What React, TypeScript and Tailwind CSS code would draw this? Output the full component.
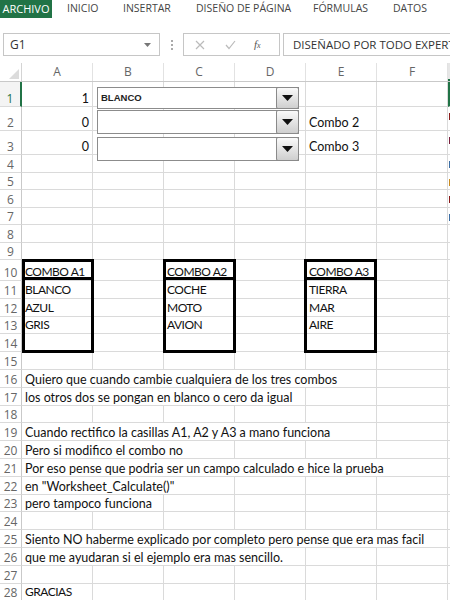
import React from "react";

const COLS = ["A", "B", "C", "D", "E", "F"];

type Row = {
  n: number;
  h: string;
  cells?: { col: number; text: string; span?: number; right?: boolean }[];
};

const rows: Row[] = [
  { n: 1, h: "h-[25px]", cells: [{ col: 0, text: "1", right: true }] },
  { n: 2, h: "h-[24px]", cells: [{ col: 0, text: "0", right: true }, { col: 4, text: "Combo 2" }] },
  { n: 3, h: "h-[24px]", cells: [{ col: 0, text: "0", right: true }, { col: 4, text: "Combo 3" }] },
  { n: 4, h: "h-[17.5px]" },
  { n: 5, h: "h-[17.5px]" },
  { n: 6, h: "h-[17.5px]" },
  { n: 7, h: "h-[17.5px]" },
  { n: 8, h: "h-[17.5px]" },
  { n: 9, h: "h-[17.5px]" },
  { n: 10, h: "h-[21px]", cells: [{ col: 0, text: "COMBO A1" }, { col: 2, text: "COMBO A2" }, { col: 4, text: "COMBO A3" }] },
  { n: 11, h: "h-[17.8px]", cells: [{ col: 0, text: "BLANCO" }, { col: 2, text: "COCHE" }, { col: 4, text: "TIERRA" }] },
  { n: 12, h: "h-[17.8px]", cells: [{ col: 0, text: "AZUL" }, { col: 2, text: "MOTO" }, { col: 4, text: "MAR" }] },
  { n: 13, h: "h-[17.8px]", cells: [{ col: 0, text: "GRIS" }, { col: 2, text: "AVION" }, { col: 4, text: "AIRE" }] },
  { n: 14, h: "h-[17.8px]" },
  { n: 15, h: "h-[17.8px]" },
  { n: 16, h: "h-[17.8px]", cells: [{ col: 0, span: 5, text: "Quiero que cuando cambie cualquiera de los tres combos" }] },
  { n: 17, h: "h-[17.8px]", cells: [{ col: 0, span: 4, text: "los otros dos se pongan en blanco o cero da igual" }] },
  { n: 18, h: "h-[17.8px]" },
  { n: 19, h: "h-[17.8px]", cells: [{ col: 0, span: 5, text: "Cuando rectifico la casillas A1, A2 y A3 a mano funciona" }] },
  { n: 20, h: "h-[17.8px]", cells: [{ col: 0, span: 3, text: "Pero si modifico el combo no" }] },
  { n: 21, h: "h-[17.8px]", cells: [{ col: 0, span: 6, text: "Por eso pense que podria ser un campo calculado e hice la prueba" }] },
  { n: 22, h: "h-[17.8px]", cells: [{ col: 0, span: 3, text: 'en "Worksheet_Calculate()"' }] },
  { n: 23, h: "h-[17.8px]", cells: [{ col: 0, span: 2, text: "pero tampoco funciona" }] },
  { n: 24, h: "h-[17.8px]" },
  { n: 25, h: "h-[17.8px]", cells: [{ col: 0, span: 6, text: "Siento NO haberme explicado por completo pero pense que era mas facil" }] },
  { n: 26, h: "h-[17.8px]", cells: [{ col: 0, span: 4, text: "que me ayudaran si el ejemplo era mas sencillo." }] },
  { n: 27, h: "h-[17.8px]" },
  { n: 28, h: "h-[17.8px]", cells: [{ col: 0, span: 1, text: "GRACIAS" }] },
];

// little bits of text spilling in from column G
const gBits: Record<number, string> = {
  1: "bg-[#b5651d]",
  2: "bg-[#8b1a1a]",
  3: "bg-[#7a1f3d]",
  4: "bg-[#3b6ea5]",
  5: "bg-[#c98a1e]",
  6: "bg-[#8b1a1a]",
  7: "bg-[#3b6ea5]",
};

const spanClass: Record<number, string> = {
  1: "col-span-1",
  2: "col-span-2",
  3: "col-span-3",
  4: "col-span-4",
  5: "col-span-5",
  6: "col-span-6",
};

const Combo = ({ top, h, text }: { top: string; h: string; text?: string }) => (
  <div className={`absolute left-[97px] w-[202px] ${top} ${h} flex border border-[#8c8c8c] bg-white`}>
    <div className="flex-1 flex items-center pl-[3px] text-[9.5px] font-bold text-[#222] [font-family:'Liberation_Sans',sans-serif]">
      {text}
    </div>
    <div className="w-[23px] -my-px -mr-px flex items-center justify-center rounded-[2px] border border-[#8a8a8a] bg-gradient-to-b from-[#fafafa] to-[#cfcfcf]">
      <svg width="11" height="6" viewBox="0 0 11 6">
        <path d="M0 0h11L5.5 6z" fill="#111" />
      </svg>
    </div>
  </div>
);

export default function App() {
  return (
    <div className="w-[450px] h-[600px] overflow-hidden bg-white [font-family:Lato,'Liberation_Sans',sans-serif]">
      {/* ribbon tabs */}
      <div className="flex h-[18px] items-center text-[10.5px] text-[#444] [font-family:'Open_Sans',sans-serif] whitespace-nowrap">
        <div className="w-[52px] h-full flex items-center justify-center bg-[#217346] text-white text-[11px]">ARCHIVO</div>
        <div className="ml-[15px] w-[56px]">INICIO</div>
        <div className="w-[73px]">INSERTAR</div>
        <div className="w-[117px]">DISEÑO DE PÁGINA</div>
        <div className="w-[80px]">FÓRMULAS</div>
        <div>DATOS</div>
      </div>

      {/* formula bar */}
      <div className="mt-[15px] flex h-[23px] items-stretch [font-family:'Open_Sans',sans-serif]">
        <div className="ml-[3px] w-[157px] flex items-center justify-between border border-[#c6c6c6] pl-[6px] pr-[8px] text-[12px] text-[#333]">
          <span>G1</span>
          <svg width="7" height="4" viewBox="0 0 7 4">
            <path d="M0 0h7L3.5 4z" fill="#777" />
          </svg>
        </div>
        <div className="w-[23px] flex flex-col items-center justify-center gap-[2px]">
          <span className="w-[2px] h-[2px] bg-[#aaa]" />
          <span className="w-[2px] h-[2px] bg-[#aaa]" />
          <span className="w-[2px] h-[2px] bg-[#aaa]" />
        </div>
        <div className="w-[97px] flex items-center border border-[#c6c6c6] px-[11px] text-[#bbb]">
          <svg width="10" height="10" viewBox="0 0 10 10" className="mr-[20px]">
            <path d="M1 1l8 8M9 1L1 9" stroke="#bbb" strokeWidth="1.2" />
          </svg>
          <svg width="11" height="10" viewBox="0 0 11 10" className="mr-[18px]">
            <path d="M1 5l3 3.5L10 1" stroke="#bbb" strokeWidth="1.2" fill="none" />
          </svg>
          <span className="text-[11px] italic text-[#555] [font-family:'Liberation_Serif',serif]">
            f<span className="text-[8px]">x</span>
          </span>
        </div>
        <div className="ml-[3px] flex-1 flex items-center border border-[#c6c6c6] border-r-0 pl-[9px] text-[11.5px] text-[#333] whitespace-nowrap overflow-hidden">
          DISEÑADO POR TODO EXPERTOS
        </div>
      </div>

      {/* sheet */}
      <div className="mt-[7px] relative">
        {/* column headers */}
        <div className="grid grid-cols-[22px_repeat(6,71px)_1fr] h-[19px] border-b border-[#c9c9c9] text-[12px] text-[#666] [font-family:'Open_Sans',sans-serif]">
          <div className="relative border-r border-[#d4d4d4]">
            <svg width="10" height="10" viewBox="0 0 10 10" className="absolute right-[2px] bottom-[2px]">
              <path d="M10 0v10H0z" fill="#dcdcdc" />
            </svg>
          </div>
          {COLS.map((c) => (
            <div key={c} className="flex items-center justify-center border-r border-[#e2e2e2]">
              {c}
            </div>
          ))}
          <div className="bg-[#e6e6e6] border-b-2 border-[#217346]" />
        </div>

        {/* rows */}
        {rows.map((r) => {
          const filled = new Map<number, { text: string; span?: number; right?: boolean }>();
          r.cells?.forEach((c) => filled.set(c.col, c));
          const out: React.ReactNode[] = [];
          let i = 0;
          while (i < 6) {
            const c = filled.get(i);
            if (c) {
              const span = c.span ?? 1;
              const caps = /^[A-Z0-9 ]+$/.test(c.text) && /[A-Z]/.test(c.text);
              out.push(
                <div
                  key={i}
                  className={`${spanClass[span]} flex items-end leading-[15px] border-r border-b border-[#dadada] text-[#111] whitespace-nowrap overflow-hidden ${
                    caps ? "text-[12px] tracking-[-0.5px] pb-[1px]" : "text-[12.5px]"
                  } ${c.right ? "justify-end pr-[3px]" : "pl-[3px]"}`}
                >
                  {c.text}
                </div>
              );
              i += span;
            } else {
              out.push(<div key={i} className="border-r border-b border-[#dadada]" />);
              i += 1;
            }
          }
          return (
            <div key={r.n} className={`grid grid-cols-[22px_repeat(6,71px)_1fr] grid-rows-[100%] ${r.h}`}>
              <div
                className={`flex items-end justify-center leading-[15px] border-b border-[#dadada] text-[12px] [font-family:'Open_Sans',sans-serif] ${
                  r.n === 1 ? "text-[#217346] border-r-2 border-r-[#217346] bg-[#f4f4f4]" : "text-[#666] border-r border-r-[#c9c9c9]"
                }`}
              >
                {r.n}
              </div>
              {out}
              <div className={`border-b border-[#dadada] ${r.n === 1 ? "border-l-2 border-l-[#217346] border-t border-t-[#217346]" : ""}`}>
                {gBits[r.n] && <div className={`w-[2px] h-[7px] mt-[6px] ml-[1px] ${gBits[r.n]}`} />}
              </div>
            </div>
          );
        })}

        {/* form-control combo boxes */}
        <Combo top="top-[24px]" h="h-[22px]" text="BLANCO" />
        <Combo top="top-[47px]" h="h-[24px]" />
        <Combo top="top-[74px]" h="h-[24px]" />

        {/* thick-bordered lists */}
        {["left-[22px] w-[72px]", "left-[163px] w-[73px]", "left-[304px] w-[73px]"].map((pos) => (
          <div key={pos} className={`absolute top-[196px] h-[94px] ${pos} border-[3px] border-black`}>
            <div className="h-[18px] border-b-[3px] border-black" />
          </div>
        ))}
      </div>
    </div>
  );
}
